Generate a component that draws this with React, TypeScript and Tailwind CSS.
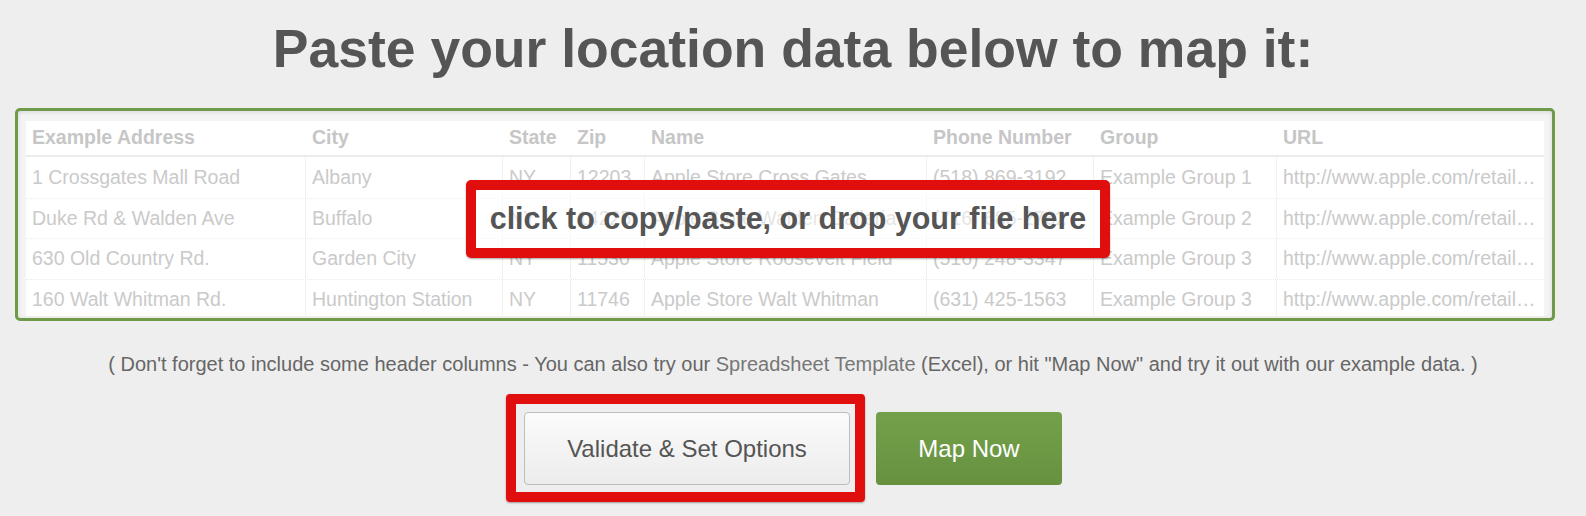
import React from "react";

type Row = string[];

const headers = [
  "Example Address",
  "City",
  "State",
  "Zip",
  "Name",
  "Phone Number",
  "Group",
  "URL",
];

const rows: Row[] = [
  ["1 Crossgates Mall Road", "Albany", "NY", "12203", "Apple Store Cross Gates", "(518) 869-3192", "Example Group 1", "http://www.apple.com/retail…"],
  ["Duke Rd & Walden Ave", "Buffalo", "NY", "14225", "Apple Store Walden Galleria", "(716) 685-2762", "Example Group 2", "http://www.apple.com/retail…"],
  ["630 Old Country Rd.", "Garden City", "NY", "11530", "Apple Store Roosevelt Field", "(516) 248-3347", "Example Group 3", "http://www.apple.com/retail…"],
  ["160 Walt Whitman Rd.", "Huntington Station", "NY", "11746", "Apple Store Walt Whitman", "(631) 425-1563", "Example Group 3", "http://www.apple.com/retail…"],
];

const cols = "grid grid-cols-[280px_197px_68px_74px_282px_167px_183px_1fr]";

// faded example spreadsheet behind the drop target
const ExampleTable = () => (
  <div className="bg-white h-full">
    <div className={`${cols} h-[36px] items-center border-b-2 border-[#ebebeb]`}>
      {headers.map((h) => (
        <div key={h} className="px-[6px] font-bold text-[#c6c6c6] whitespace-nowrap overflow-hidden">
          {h}
        </div>
      ))}
    </div>
    {rows.map((r, i) => (
      <div
        key={i}
        className={`${cols} h-[40.5px] ${i > 0 ? "border-t border-dotted border-[#ececec]" : ""}`}
      >
        {r.map((c, j) => (
          <div
            key={j}
            className={`px-[6px] flex items-center text-[#cacaca] whitespace-nowrap overflow-hidden ${
              j < 7 ? "border-r border-[#f0f0f0]" : ""
            }`}
          >
            {c}
          </div>
        ))}
      </div>
    ))}
  </div>
);

export default function App() {
  return (
    <div
      className="min-h-[516px] w-full bg-[#eeeeee] text-[19.5px] pt-[17px]"
      style={{ fontFamily: '"Liberation Sans", Arial, Helvetica, sans-serif' }}
    >
      <h1 className="text-center text-[53.5px] leading-[64px] font-bold text-[#555555]">
        Paste your location data below to map it:
      </h1>

      {/* paste area */}
      <div className="ml-[15px] mr-[31px] mt-[27px] relative">
        <div className="h-[213px] border-[3px] border-[#6f9a47] rounded-[5px] bg-[#f4f4f4] pt-[10px] px-[8px] pb-[2px] overflow-hidden shadow-[inset_0_1px_5px_rgba(0,0,0,0.12)] cursor-pointer">
          <ExampleTable />
        </div>
        <div className="absolute left-[451px] top-[72px] w-[644px] h-[78px] border-[10px] border-[#e10e0e] rounded-[5px] bg-white/50 flex items-center justify-center shadow-[0_1px_2px_rgba(0,0,0,0.35)]">
          <span className="text-[30.5px] font-bold text-[#555555] whitespace-nowrap">
            click to copy/paste, or drop your file here
          </span>
        </div>
      </div>

      <p className="mt-[29px] text-center text-[20px] leading-[28px] text-[#666666]">
        ( Don't forget to include some header columns - You can also try our{" "}
        <a className="text-[#777777]">Spreadsheet Template</a> (Excel), or hit "Map Now" and try
        it out with our example data. )
      </p>

      <div className="mt-[34px] flex justify-center gap-[26px]">
        <div className="relative">
          <div className="absolute left-[-18px] top-[-18px] right-[-15px] bottom-[-17px] border-[10px] border-[#e10e0e] rounded-[4px] shadow-[0_1px_2px_rgba(0,0,0,0.35)]" />
          <button className="relative w-[326px] h-[73px] rounded-[4px] border border-[#bdbdbd] bg-gradient-to-b from-[#fbfbfb] to-[#ececec] text-[24px] text-[#555555]">
            Validate &amp; Set Options
          </button>
        </div>
        <button className="w-[186px] h-[73px] rounded-[4px] bg-gradient-to-b from-[#74a04b] to-[#67913f] text-[24px] text-white">
          Map Now
        </button>
      </div>
    </div>
  );
}
